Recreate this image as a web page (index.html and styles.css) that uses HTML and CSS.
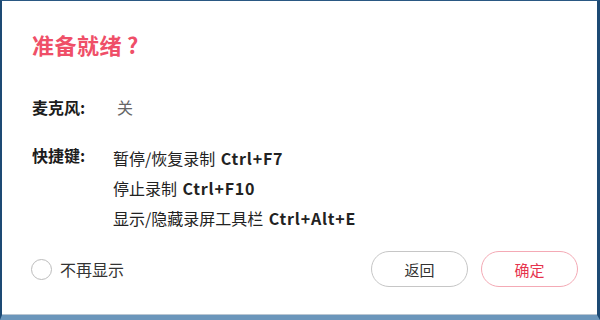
FILE: index.html
```html
<!DOCTYPE html>
<html lang="zh-CN">
<head>
<meta charset="utf-8">
<link rel="stylesheet" href="styles.css">
</head>
<body>
<div class="window">
  <h1 class="title">准备就绪<span class="q">?</span></h1>
  <div class="row mic-row">
    <div class="label">麦克风:</div>
    <div class="value">关</div>
  </div>
  <div class="row keys-row">
    <div class="label">快捷键:</div>
    <div class="lines">
      <div class="line">暂停/恢复录制 <span class="key">Ctrl+F7</span></div>
      <div class="line">停止录制 <span class="key">Ctrl+F10</span></div>
      <div class="line">显示/隐藏录屏工具栏 <span class="key">Ctrl+Alt+E</span></div>
    </div>
  </div>
  <div class="footer">
    <label class="check">
      <span class="radio"></span>
      <span class="check-text">不再显示</span>
    </label>
    <div class="buttons">
      <button class="btn btn-back">返回</button>
      <button class="btn btn-ok">确定</button>
    </div>
  </div>
</div>
</body>
</html>
```

FILE: styles.css
```css
html, body {
  margin: 0;
  padding: 0;
  width: 600px;
  height: 320px;
  overflow: hidden;
  background: #ffffff;
}

.window {
  box-sizing: border-box;
  width: 600px;
  height: 320px;
  background: #ffffff;
  border-left: 2px solid #1d4a74;
  border-top: 1px solid #2a5883;
  border-right: 3px solid #1d4a74;
  border-bottom: 5px solid #6b96bb;
  box-shadow: inset 0 -1px 0 #b9c6d2;
  padding: 0 19px 0 30px;
  font-family: "Noto Sans CJK SC", "Noto Sans", sans-serif;
  color: #222;
  display: flex;
  flex-direction: column;
}

.title {
  margin: 28px 0 0 0;
  font-size: 22px;
  line-height: 30px;
  font-weight: 700;
  color: #ef4f68;
  letter-spacing: 0.5px;
}

.title .q {
  margin-left: 5px;
}

.row {
  display: flex;
}

.label {
  width: 81px;
  flex: none;
  font-size: 16px;
  font-weight: 700;
  color: #1c1c1c;
}

.mic-row {
  margin-top: 36px;
  line-height: 24px;
}

.mic-row .value {
  padding-left: 4px;
  font-size: 16px;
  color: #666;
}

.keys-row {
  margin-top: 24px;
  line-height: 30px;
}

.keys-row .label {
  line-height: 24px;
}

.lines {
  font-size: 16px;
  color: #222;
}

.line {
  line-height: 30px;
}

.key {
  font-weight: 600;
  letter-spacing: 0.8px;
  margin-left: 2px;
}

.footer {
  margin-top: 18px;
  display: flex;
  align-items: center;
  justify-content: space-between;
  height: 36px;
}

.check {
  display: flex;
  align-items: center;
  margin-left: -1px;
}

.radio {
  box-sizing: border-box;
  width: 21px;
  height: 21px;
  border: 1.5px solid #bcbcbc;
  border-radius: 50%;
  background: #fff;
}

.check-text {
  margin-left: 8px;
  font-size: 16px;
  color: #333;
}

.buttons {
  display: flex;
  gap: 13px;
}

.btn {
  box-sizing: border-box;
  width: 97px;
  height: 36px;
  border-radius: 18px;
  background: #fff;
  font-family: "Noto Sans CJK SC", "Noto Sans", sans-serif;
  font-size: 15px;
  padding: 0;
  cursor: pointer;
}

.btn-back {
  border: 1px solid #c6c6c6;
  color: #333;
}

.btn-ok {
  border: 1px solid #f4aab5;
  color: #e6344e;
}
```
